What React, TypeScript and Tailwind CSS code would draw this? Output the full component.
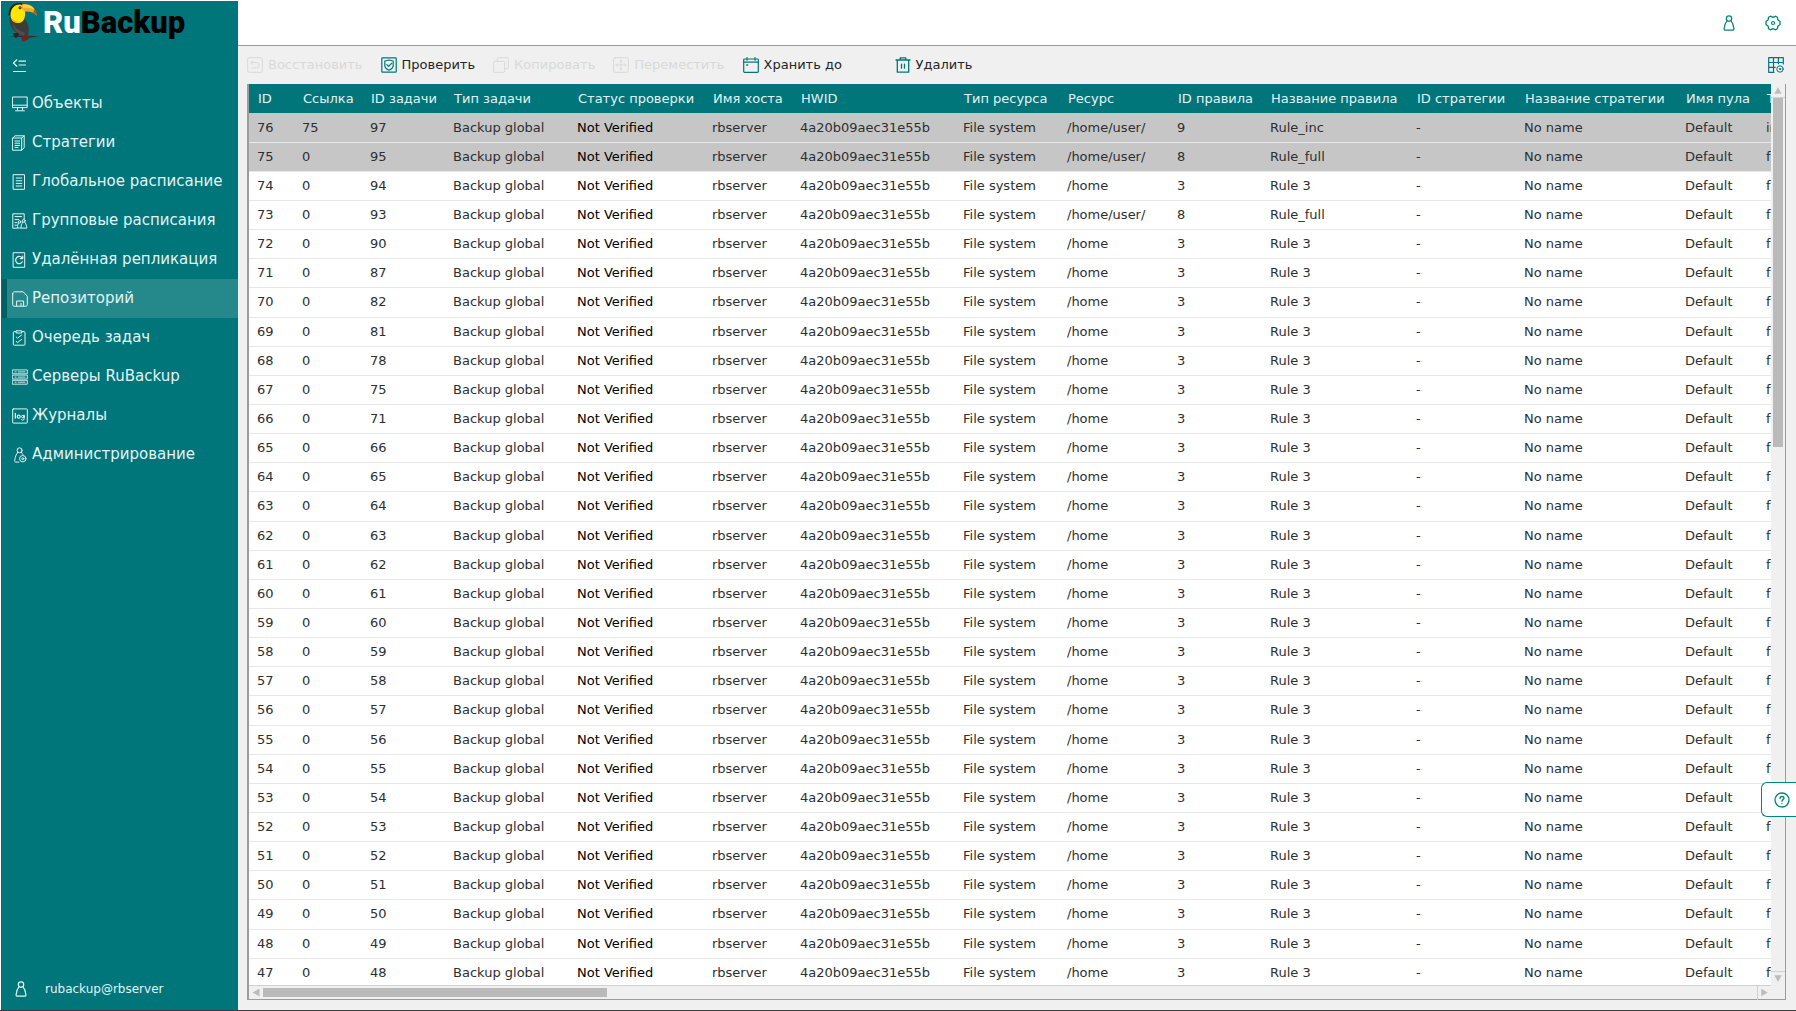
import type { ReactNode } from 'react';
import clsx from 'clsx';

interface IconProps {
  className?: string;
  children?: ReactNode;
}

function Icon({ className, children }: IconProps) {
  return (
    <svg
      viewBox="0 0 16 16"
      fill="none"
      stroke="currentColor"
      strokeLinejoin="round"
      strokeLinecap="round"
      className={clsx('h-4 w-4 shrink-0', className)}
      aria-hidden="true"
    >
      {children}
    </svg>
  );
}

function UserIcon({ className }: IconProps) {
  return (
    <Icon className={className}>
      <circle cx="8" cy="3.6" r="2.7" strokeWidth="1.2" />
      <path d="M6.1 5.7C4.4 7.6 3.5 10.6 3.1 13.6c-.1 1 .4 1.6 1.3 1.6h7.2c.9 0 1.4-.6 1.3-1.6-.4-3-1.3-6-3-7.9" strokeWidth="1.2" />
    </Icon>
  );
}

const icons = {
  objects: (
    <Icon>
      <path d="M.8 1h14.4v10.6H.8zM.8 9.2h14.4M5.5 11.6v2.6M10.5 11.6v2.6M3.5 14.8h9" />
    </Icon>
  ),
  strategies: (
    <Icon>
      <path d="M.8 3h8.9v12.2H.8zM.8 3 3 .8h9.2v11.9l-2.5 2.5M9.7 3l2.5-2.2M3 6h4.6M3 8.2h4.6M3 10.4h4.6M3 12.4h3" />
    </Icon>
  ),
  global: (
    <Icon>
      <path d="M1.5.7h11v14.6h-11zM4.2 4h5.6M4.2 6.8h5.6M4.2 9.4h5.6M4.2 12h5.6" />
    </Icon>
  ),
  group: (
    <Icon>
      <path d="M5 15.2H.8V.8h11.4v5M3 3.6h6.6M3 6.6h3.6M3 9.6h2M3 12.2h1.4" />
      <circle cx="7.6" cy="8.8" r="1.2" />
      <circle cx="11.8" cy="7.8" r="1.4" />
      <path d="M6.6 10c-.8 1.4-1.2 3-1.2 5h3.2M10.8 9.2c-1.2 1.6-1.8 3.6-1.8 5.9h5.8c0-2.3-.8-4.3-2-5.9" />
    </Icon>
  ),
  replication: (
    <Icon>
      <path d="M1.5.7h11.2v14.6H1.5z" />
      <path d="M10.200 6A3.600 3.600 0 1 0 10.400 9.800M10.700 4.200v2.400H8.300" strokeWidth="1.200" />
    </Icon>
  ),
  repository: (
    <Icon>
      <path d="M.7 3v10.4c0 1.2.6 1.8 1.8 1.8h11c1.2 0 1.8-.6 1.8-1.8V5.2L11.2.8H2.6C1.4.8.7 1.6.7 3zM4.6 15V10h7v5M9 12.4V15" />
    </Icon>
  ),
  queue: (
    <Icon>
      <path d="M4 1.6H2.2c-.6 0-.9.3-.9.9v11.8c0 .6.3.9.9.9h9.9c.6 0 .9-.3.9-.9V2.5c0-.6-.3-.9-.9-.9h-1.800M4.500.8h5.200v2.200H4.500zM4.200 7l1.300 1.200L9.600 5M4.200 11.400l1.300 1.200 4.100-3.200" />
    </Icon>
  ),
  servers: (
    <Icon>
      <path
        d="M.7.9h14.6v3.9H.7zM.7 6.1h14.6V10H.7zM.7 11.300h14.600v3.900H.7zM3 2.900h1.200M6.200 2.900h6.800M3 8.100h1.200M6.200 8.100h6.800M3 13.200h1.200M6.200 13.200h6.800"
        strokeWidth=".9"
      />
    </Icon>
  ),
  logs: (
    <Icon>
      <rect x=".7" y=".9" width="14.6" height="14.2" rx=".6" />
      <path d="M3.3 5.4v4.8" strokeWidth="1.2" />
      <circle cx="6.7" cy="8.7" r="1.5" strokeWidth="1.2" />
      <path d="M12.2 7.2v3.6c0 .9-.6 1.3-1.400 1.300-.6 0-1-.1-1.300-.4" />
      <circle cx="10.9" cy="8.6" r="1.3" />
    </Icon>
  ),
  admin: (
    <Icon>
      <circle cx="7.6" cy="3.3" r="2.5" />
      <path d="M5.8 5.2C4 7.400 3 10.400 2.700 13.700c-.1.900.3 1.400 1.200 1.400h3M9.400 5.200c.6.700 1 1.400 1.400 2.200" />
      <circle cx="10.8" cy="11.7" r="3.2" />
      <circle cx="10.8" cy="11.7" r="1" />
    </Icon>
  ),
  restore: (
    <Icon>
      <rect x=".7" y=".7" width="14.6" height="14.6" rx="1.5" />
      <path d="M4 5.500h5.500a2.700 2.700 0 0 1 0 5.400H5M5.800 3.500 3.800 5.500l2 2" />
    </Icon>
  ),
  verify: (
    <Icon>
      <rect x=".8" y=".8" width="14.4" height="14.4" rx=".8" strokeWidth="1.2" />
      <path d="M8 3 12.200 4v4.500c0 2-1.600 3.500-4.200 4.700-2.600-1.200-4.200-2.700-4.200-4.700V4zM5.800 7.600l1.800 1.700 3-3" strokeWidth="1.2" />
    </Icon>
  ),
  copy: (
    <Icon>
      <rect x=".7" y="4.3" width="11" height="11" rx="1" />
      <path d="M4.300 4V1.600c0-.6.300-.9.900-.9h9.200c.6 0 .9.300.9.900v9.200c0 .6-.3.900-.9.900H12" />
    </Icon>
  ),
  move: (
    <Icon>
      <rect x=".7" y=".7" width="14.6" height="14.6" rx="1.5" />
      <path d="M8 3v10M3 8h10M6.800 4.200 8 3l1.200 1.200M6.800 11.800 8 13l1.200-1.200M4.200 6.800 3 8l1.200 1.200M11.800 6.800 13 8l-1.200 1.200" />
    </Icon>
  ),
  keep: (
    <Icon>
      <rect x=".7" y="2" width="14.6" height="13.3" rx=".8" strokeWidth="1.2" />
      <path d="M.7 5.200h14.600M4 .6v2.600M12 .6v2.600" strokeWidth="1.2" />
      <path d="M3.800 8h.8" strokeWidth="1.6" />
    </Icon>
  ),
  remove: (
    <Icon>
      <path d="M1 3h14M5.200 3V.9h5.600V3M2.300 3v12.200h11.400V3M6.500 7.200v4M9.500 7.200v4" strokeWidth="1.3" />
    </Icon>
  ),
};

const navItems = [
  { label: 'Объекты', icon: icons.objects },
  { label: 'Стратегии', icon: icons.strategies },
  { label: 'Глобальное расписание', icon: icons.global },
  { label: 'Групповые расписания', icon: icons.group },
  { label: 'Удалённая репликация', icon: icons.replication },
  { label: 'Репозиторий', icon: icons.repository, active: true },
  { label: 'Очередь задач', icon: icons.queue },
  { label: 'Серверы RuBackup', icon: icons.servers },
  { label: 'Журналы', icon: icons.logs },
  { label: 'Администрирование', icon: icons.admin },
];

const actions = [
  { label: 'Восстановить', icon: icons.restore, disabled: true },
  { label: 'Проверить', icon: icons.verify },
  { label: 'Копировать', icon: icons.copy, disabled: true },
  { label: 'Переместить', icon: icons.move, disabled: true },
  { label: 'Хранить до', icon: icons.keep, wide: true },
  { label: 'Удалить', icon: icons.remove },
];

const columns = [
  { title: 'ID', width: 'w-[45px]' },
  { title: 'Ссылка', width: 'w-[68px]' },
  { title: 'ID задачи', width: 'w-[83px]' },
  { title: 'Тип задачи', width: 'w-[124px]' },
  { title: 'Статус проверки', width: 'w-[135px]' },
  { title: 'Имя хоста', width: 'w-[88px]' },
  { title: 'HWID', width: 'w-[163px]' },
  { title: 'Тип ресурса', width: 'w-[104px]' },
  { title: 'Ресурс', width: 'w-[110px]' },
  { title: 'ID правила', width: 'w-[93px]' },
  { title: 'Название правила', width: 'w-[146px]' },
  { title: 'ID стратегии', width: 'w-[108px]' },
  { title: 'Название стратегии', width: 'w-[161px]' },
  { title: 'Имя пула', width: 'w-[81px]' },
  { title: 'Тип', width: 'w-[120px]' },
];

const taskIds = [
  97, 95, 94, 93, 90, 87, 82, 81, 78, 75, 71, 66, 65, 64, 63, 62, 61, 60, 59, 58, 57, 56, 55, 54, 53, 52, 51, 50, 49,
  48,
];

interface RuleInfo {
  link?: number;
  path: string;
  ruleId: number;
  rule: string;
  type?: string;
}

const customRules: Record<number, RuleInfo> = {
  76: { link: 75, path: '/home/user/', ruleId: 9, rule: 'Rule_inc', type: 'incremental' },
  75: { path: '/home/user/', ruleId: 8, rule: 'Rule_full' },
  73: { path: '/home/user/', ruleId: 8, rule: 'Rule_full' },
};

const defaultRule: RuleInfo = { path: '/home', ruleId: 3, rule: 'Rule 3' };

const selectedIds = [76, 75];

const records = taskIds.map((taskId, index) => {
  const id = 76 - index;
  const info = customRules[id] ?? defaultRule;
  return {
    id,
    cells: [
      id,
      info.link ?? 0,
      taskId,
      'Backup global',
      'Not Verified',
      'rbserver',
      '4a20b09aec31e55b',
      'File system',
      info.path,
      info.ruleId,
      info.rule,
      '-',
      'No name',
      'Default',
      info.type ?? 'full',
    ],
  };
});

function Logo() {
  return (
    <div className="flex h-[42px] items-center gap-[3px] pl-1">
      <svg viewBox="20 5 102 120" className="h-10 w-[34px] shrink-0" aria-hidden="true">
        <path d="M26 110c30-4 60-5 94-2l-30 4c-20-2-42-1-64-2z" fill="#3a2a26" />
        <path d="M30 50c0 30 14 48 38 56l2 14 18-2-2-14c6-22 0-38-12-48z" fill="#3c3c3b" />
        <path d="M42 68c6 16 18 24 36 30l-6 8C48 98 40 84 40 66z" fill="#504e4d" />
        <path d="M28 46c-2-20 10-36 28-38 12-1 20 4 22 12L40 40z" fill="#1d1d1b" />
        <path d="M34 46c-2-14 5-27 17-32 7-3 14-2 19 2 2 6 4 10 7 16 2 18-3 34-18 36-15 0-24-8-25-22z" fill="#ffe600" />
        <path d="M35 52c5 8 14 12 26 12-8 6-23 4-26-12z" fill="#f9b000" />
        <path d="M68 12c20-4 42 6 44 34-8-9-18-13-36-12-7-6-12-14-8-22z" fill="#f9a825" />
        <path d="M70 14c14-2 28 2 36 14-12-6-24-7-35-5z" fill="#ffd54a" />
        <path d="M104 26c6 5 8 12 8 20-3-4-6-6-10-7z" fill="#d9480f" />
        <circle cx="62" cy="22" r="4.5" fill="#1d1d1b" />
        <circle cx="62" cy="22" r="1.5" fill="#fff" />
        <path d="M66 106l26 2-8 8-6 7H68z" fill="#7b1f1c" />
        <path d="M42 98l14 0 4 6-10 10c-4-2-8-10-8-16z" fill="#2b2523" />
      </svg>
      <span className="font-[Roboto,sans-serif] text-[31px] leading-none font-black text-white">
        Ru<span className="text-black">Backup</span>
      </span>
    </div>
  );
}

function Sidebar() {
  return (
    <aside className="flex w-[236px] shrink-0 flex-col bg-[#00757a] text-[#e4f4f4]">
      <Logo />
      <button type="button" className="mt-[11px] ml-2.5 flex h-6 w-6 items-center" aria-label="Свернуть меню">
        <Icon>
          <path d="M4.800 1.800 1.500 5l3.300 3.200M7 3.200h6.500M7 7h6.500M1.500 13.500h12" strokeWidth="1.2" />
        </Icon>
      </button>
      <nav className="mt-1.5 flex flex-col">
        {navItems.map((item) => (
          <a
            key={item.label}
            href="#"
            className={clsx(
              'flex h-[39px] items-center gap-1 border-l-[5px] pl-[5px] text-[15px] whitespace-nowrap',
              item.active ? 'border-[#006064] bg-[#25898c]' : 'border-transparent',
            )}
          >
            {item.icon}
            {item.label}
          </a>
        ))}
      </nav>
      <div className="mt-auto flex h-[42px] items-center gap-4 pl-[11px] text-xs">
        <UserIcon />
        rubackup@rbserver
      </div>
    </aside>
  );
}

function Toolbar() {
  return (
    <div className="flex h-[38px] items-center pr-3 pl-[9px]">
      {actions.map((action) => (
        <button
          key={action.label}
          type="button"
          disabled={action.disabled}
          className={clsx(
            'mr-[18px] flex items-center gap-[5px] text-[13px]',
            action.disabled ? 'text-[#d9d9d9]' : 'text-[#00757a]',
            action.wide && 'w-[134px]',
          )}
        >
          {action.icon}
          <span className={action.disabled ? 'text-[#d9d9d9]' : 'text-[#232629]'}>{action.label}</span>
        </button>
      ))}
      <button type="button" className="ml-auto text-[#00757a]" aria-label="Настройка столбцов">
        <Icon>
          <path d="M6 15.300H.7V.7h14.600V7M.7 5.500h14.600M.7 10.400h6.500M5.500.7v14.600M10.400.7v6" strokeWidth="1.2" />
          <circle cx="12" cy="12" r="3.2" />
          <circle cx="12" cy="12" r=".7" />
        </Icon>
      </button>
    </div>
  );
}

function RecordsTable() {
  return (
    <table className="w-[1629px] table-fixed border-collapse text-left text-[13px] whitespace-nowrap">
      <thead>
        <tr className="h-[29px] bg-[#00757a] text-[#e4f4f4]">
          {columns.map((column) => (
            <th key={column.title} className={clsx('p-0 pl-[9px] font-normal', column.width)}>
              {column.title}
            </th>
          ))}
        </tr>
      </thead>
      <tbody>
        {records.map((record) => (
          <tr
            key={record.id}
            className={clsx(
              'h-[29px] border-b border-[#e8e8e8] nth-[7n]:h-[30px]',
              selectedIds.includes(record.id) ? 'bg-[#c6c6c6]' : 'bg-white',
            )}
          >
            {record.cells.map((cell, index) => (
              <td key={columns[index].title} className={clsx('p-0 pl-2', index === 4 ? 'text-black' : 'text-[#2d2f31]')}>
                {cell}
              </td>
            ))}
          </tr>
        ))}
      </tbody>
    </table>
  );
}

function ScrollArrow({ path, label, className }: { path: string; label: string; className?: string }) {
  return (
    <button type="button" aria-label={label} className={clsx('h-3.5 w-3.5 shrink-0 border-[#d0d0d0]', className)}>
      <svg viewBox="0 0 14 14" className="h-full w-full" fill="#bcbcbc" aria-hidden="true">
        <path d={path} />
      </svg>
    </button>
  );
}

function RecordsPanel() {
  return (
    <div className="mr-2.5 mb-2.5 ml-[9px] grid min-h-0 flex-1 grid-cols-[minmax(0,1fr)_14px] grid-rows-[minmax(0,1fr)_14px] border-r border-b border-l-2 border-[#9c9c9c] bg-[#f0f0f0]">
      <div className="overflow-hidden bg-white">
        <RecordsTable />
      </div>
      <div className="flex flex-col">
        <ScrollArrow path="M7 3.500 11 10.500H3z" label="Вверх" className="border-b" />
        <div className="mx-0.5 flex min-h-0 flex-1 flex-col">
          <div className="h-[40%] bg-[#bababa]" />
        </div>
        <ScrollArrow path="M7 10.500 3 3.500h8z" label="Вниз" className="border-t" />
      </div>
      <div className="flex border-t border-[#d0d0d0]">
        <ScrollArrow path="M3.500 6.500 10.500 2.500v8z" label="Влево" />
        <div className="flex flex-1 py-0.5">
          <div className="w-[23%] bg-[#bababa]" />
        </div>
        <ScrollArrow path="M10.500 6.500 3.500 2.500v8z" label="Вправо" className="border-l" />
      </div>
    </div>
  );
}

export default function App() {
  return (
    <div className="relative h-screen overflow-hidden border-b border-[#3a3a3e] bg-white pt-px pl-px font-['DejaVu_Sans',sans-serif]">
      <div className="flex h-full border-l border-[#3f5557]">
        <Sidebar />
        <main className="flex min-w-0 flex-1 flex-col bg-[#f0f0f0]">
          <header className="flex h-[45px] items-center justify-end gap-7 border-b border-[#999999] bg-white pr-[15px] text-[#00857a]">
            <button type="button" aria-label="Пользователь">
              <UserIcon />
            </button>
            <button type="button" aria-label="Настройки">
              <Icon>
                <path
                  d="M5.300 1.200 8 2.300l2.700-1.100 1.700 1 .4 2.600 2.200 1.800v2.800l-2.200 1.800-.4 2.600-1.700 1L8 13.700l-2.700 1.100-1.700-1-.4-2.600L1 9.400V6.600l2.200-1.800.4-2.600z"
                  strokeWidth="1.3"
                />
                <circle cx="8" cy="8" r="1.5" strokeWidth="1.2" />
              </Icon>
            </button>
          </header>
          <Toolbar />
          <RecordsPanel />
        </main>
      </div>
      <button
        type="button"
        aria-label="Справка"
        className="absolute right-0 bottom-[193px] flex h-[35px] w-[35px] items-center rounded-l-md border border-r-0 border-[#00857a] bg-white pl-3 text-[#00857a]"
      >
        <Icon>
          <circle cx="8" cy="8" r="7" strokeWidth="1.3" />
          <path d="M6 6.400C6 5.200 6.900 4.500 8 4.500s2 .7 2 1.800c0 1.300-2 1.400-2 2.900M8 11.300v.2" strokeWidth="1.3" />
        </Icon>
      </button>
    </div>
  );
}
